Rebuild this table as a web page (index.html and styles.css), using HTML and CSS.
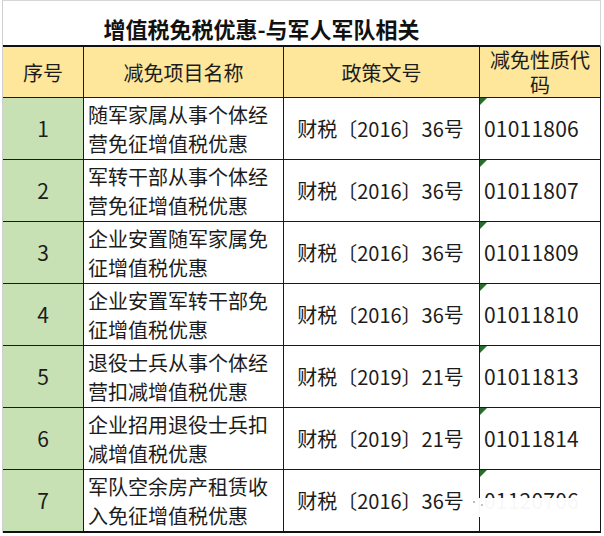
FILE: index.html
```html
<!DOCTYPE html>
<html lang="zh-CN">
<head>
<meta charset="utf-8">
<title>增值税免税优惠-与军人军队相关</title>
<link rel="stylesheet" href="styles.css">
</head>
<body>
<div class="sheet">
  <div class="title">增值税免税优惠-与军人军队相关</div>

  <div class="cell hd">序号</div>
  <div class="cell hd">减免项目名称</div>
  <div class="cell hd">政策文号</div>
  <div class="cell hd wrap">减免性质代码</div>

  <div class="cell seq">1</div>
  <div class="cell name">随军家属从事个体经营免征增值税优惠</div>
  <div class="cell doc">财税〔2016〕36号</div>
  <div class="cell code"><span class="tri"></span>01011806</div>

  <div class="cell seq">2</div>
  <div class="cell name">军转干部从事个体经营免征增值税优惠</div>
  <div class="cell doc">财税〔2016〕36号</div>
  <div class="cell code"><span class="tri"></span>01011807</div>

  <div class="cell seq">3</div>
  <div class="cell name">企业安置随军家属免征增值税优惠</div>
  <div class="cell doc">财税〔2016〕36号</div>
  <div class="cell code"><span class="tri"></span>01011809</div>

  <div class="cell seq">4</div>
  <div class="cell name">企业安置军转干部免征增值税优惠</div>
  <div class="cell doc">财税〔2016〕36号</div>
  <div class="cell code"><span class="tri"></span>01011810</div>

  <div class="cell seq">5</div>
  <div class="cell name">退役士兵从事个体经营扣减增值税优惠</div>
  <div class="cell doc">财税〔2019〕21号</div>
  <div class="cell code"><span class="tri"></span>01011813</div>

  <div class="cell seq">6</div>
  <div class="cell name">企业招用退役士兵扣减增值税优惠</div>
  <div class="cell doc">财税〔2019〕21号</div>
  <div class="cell code"><span class="tri"></span>01011814</div>

  <div class="cell seq last">7</div>
  <div class="cell name last">军队空余房产租赁收入免征增值税优惠</div>
  <div class="cell doc last">财税〔2016〕36号</div>
  <div class="cell code last"><span class="tri"></span>01120706</div>

  <div class="watermark"></div>
</div>
</body>
</html>
```

FILE: styles.css
```css
html, body {
  margin: 0;
  padding: 0;
  background: #ffffff;
}

body {
  width: 604px;
  height: 536px;
  overflow: hidden;
  font-family: "Noto Sans CJK SC", "Noto Sans", sans-serif;
  color: #1c1c1c;
}

.sheet {
  position: relative;
  margin-left: 2px;
  width: 598px;
  border-left: 1px solid #cfcfcf;
  border-top: 1px solid #d6d6d6;
  display: grid;
  grid-template-columns: 81px 200px 196px 121px;
  grid-template-rows: 46px 51px repeat(6, 62px) 63px;
}

.title {
  grid-column: 1 / -1;
  box-sizing: border-box;
  border-bottom: 2px solid #111;
  border-right: 1px solid #d6d6d6;
  display: flex;
  align-items: center;
  justify-content: center;
  padding: 10px 80px 0 0;
  font-size: 22px;
  font-weight: 700;
  color: #111;
}

.cell {
  position: relative;
  box-sizing: border-box;
  border-right: 1px solid #1a1a1a;
  border-bottom: 1px solid #1a1a1a;
  display: flex;
  align-items: center;
  font-size: 20px;
  line-height: 29px;
  overflow: hidden;
}

.cell.last {
  border-bottom: 2px solid #111;
}

.hd {
  background: #fee69b;
  justify-content: center;
  text-align: center;
}

.hd.wrap {
  padding: 0 4px;
  line-height: 25px;
  overflow: visible;
}

.seq {
  background: #c7e1b5;
  justify-content: center;
  font-size: 21px;
}

.name {
  padding-left: 4px;
  padding-right: 10px;
}

.doc {
  justify-content: center;
  white-space: nowrap;
  padding-right: 2px;
}

.code {
  padding-left: 4px;
  font-size: 21px;
  letter-spacing: 0.2px;
}

.tri {
  position: absolute;
  left: 0;
  top: 0;
  width: 0;
  height: 0;
  border-top: 7px solid #2a6e2e;
  border-right: 7px solid transparent;
}

.watermark {
  position: absolute;
  left: 466px;
  top: 497px;
  width: 128px;
  height: 19px;
  background:
    radial-gradient(circle, #bdbdbd 0.8px, transparent 1.2px) 2px 1px / 6px 6px no-repeat,
    radial-gradient(circle, #c4c4c4 0.8px, transparent 1.2px) 10px 4px / 6px 6px no-repeat,
    rgba(255, 255, 255, 0.97);
}
```
